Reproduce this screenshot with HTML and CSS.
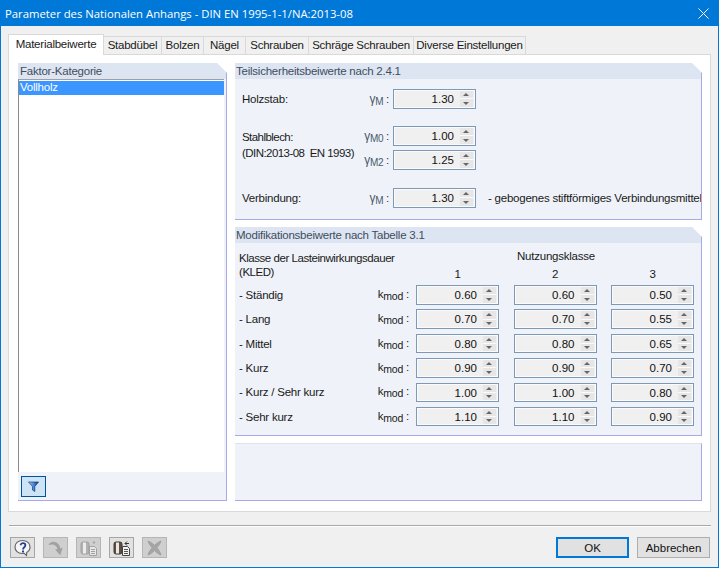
FILE: index.html
```html
<!DOCTYPE html>
<html lang="de">
<head>
<meta charset="utf-8">
<title>Parameter des Nationalen Anhangs</title>
<link rel="stylesheet" href="styles.css">
</head>
<body>
<div class="window">
  <div class="titlebar">
    <span class="title">Parameter des Nationalen Anhangs - DIN EN 1995-1-1/NA:2013-08</span>
    <svg class="close" width="11" height="11" viewBox="0 0 11 11"><path d="M.5.5l10 10M10.500.5l-10 10" stroke="#fff" stroke-width="1" fill="none"/></svg>
  </div>
  <div class="content">
    <div class="tabs">
      <div class="tab active">Materialbeiwerte</div>
      <div class="tab w-stab">Stabdübel</div>
      <div class="tab w-bolz">Bolzen</div>
      <div class="tab w-nag">Nägel</div>
      <div class="tab w-sch">Schrauben</div>
      <div class="tab w-schr">Schräge Schrauben</div>
      <div class="tab w-div">Diverse Einstellungen</div>
    </div>
    <div class="pane">
      <section class="panel left">
        <div class="head">Faktor-Kategorie</div>
        <div class="list"><div class="item">Vollholz</div></div>
        <div class="list-foot">
          <button class="filter" aria-label="Filter">
            <svg width="11" height="11" viewBox="0 0 11 11"><defs><linearGradient id="f" x1="0" x2="1" y1="0" y2="0"><stop offset="0" stop-color="#a8d0f8"/><stop offset=".5" stop-color="#4b8ad8"/><stop offset="1" stop-color="#10306f"/></linearGradient></defs><path d="M.5 1h10L6.800 5.500V10.500L4.500 9V5.500z" fill="url(#f)" stroke="#1c3c78" stroke-width=".7"/></svg>
          </button>
        </div>
      </section>
      <div class="right">
        <section class="panel p1">
          <div class="head">Teilsicherheitsbeiwerte nach 2.4.1</div>
          <div class="safety">
            <div class="lbl r-holz">Holzstab:</div>
            <div class="sym r-holz"><i>γ</i><sub>M</sub> :</div>
            <div class="spin r-holz"><span class="val">1.30</span><span class="arrows"><b class="up"></b><b class="dn"></b></span></div>

            <div class="lbl r-st1">Stahlblech:<br>(DIN:2013-08&nbsp; EN 1993)</div>
            <div class="sym r-m0"><i>γ</i><sub>M0</sub> :</div>
            <div class="spin r-m0"><span class="val">1.00</span><span class="arrows"><b class="up"></b><b class="dn"></b></span></div>
            <div class="sym r-m2"><i>γ</i><sub>M2</sub> :</div>
            <div class="spin r-m2"><span class="val">1.25</span><span class="arrows"><b class="up"></b><b class="dn"></b></span></div>

            <div class="lbl r-ver">Verbindung:</div>
            <div class="sym r-ver"><i>γ</i><sub>M</sub> :</div>
            <div class="spin r-ver"><span class="val">1.30</span><span class="arrows"><b class="up"></b><b class="dn"></b></span></div>
            <div class="note r-ver">- gebogenes stiftförmiges Verbindungsmittel</div>
          </div>
        </section>
        <section class="panel p2">
          <div class="head">Modifikationsbeiwerte nach Tabelle 3.1</div>
          <div class="mods">
            <div class="kled">Klasse der Lasteinwirkungsdauer<br>(KLED)</div>
            <div class="nutz">Nutzungsklasse</div>
            <div class="cols">
              <span class="cn">1</span><span class="cn">2</span><span class="cn">3</span>
            </div>
            <div class="mrow">
              <div class="mlbl">- Ständig</div><div class="k">k<sub>mod</sub> :</div>
              <div class="spin"><span class="val">0.60</span><span class="arrows"><b class="up"></b><b class="dn"></b></span></div>
              <div class="spin"><span class="val">0.60</span><span class="arrows"><b class="up"></b><b class="dn"></b></span></div>
              <div class="spin"><span class="val">0.50</span><span class="arrows"><b class="up"></b><b class="dn"></b></span></div>
            </div>
            <div class="mrow">
              <div class="mlbl">- Lang</div><div class="k">k<sub>mod</sub> :</div>
              <div class="spin"><span class="val">0.70</span><span class="arrows"><b class="up"></b><b class="dn"></b></span></div>
              <div class="spin"><span class="val">0.70</span><span class="arrows"><b class="up"></b><b class="dn"></b></span></div>
              <div class="spin"><span class="val">0.55</span><span class="arrows"><b class="up"></b><b class="dn"></b></span></div>
            </div>
            <div class="mrow">
              <div class="mlbl">- Mittel</div><div class="k">k<sub>mod</sub> :</div>
              <div class="spin"><span class="val">0.80</span><span class="arrows"><b class="up"></b><b class="dn"></b></span></div>
              <div class="spin"><span class="val">0.80</span><span class="arrows"><b class="up"></b><b class="dn"></b></span></div>
              <div class="spin"><span class="val">0.65</span><span class="arrows"><b class="up"></b><b class="dn"></b></span></div>
            </div>
            <div class="mrow">
              <div class="mlbl">- Kurz</div><div class="k">k<sub>mod</sub> :</div>
              <div class="spin"><span class="val">0.90</span><span class="arrows"><b class="up"></b><b class="dn"></b></span></div>
              <div class="spin"><span class="val">0.90</span><span class="arrows"><b class="up"></b><b class="dn"></b></span></div>
              <div class="spin"><span class="val">0.70</span><span class="arrows"><b class="up"></b><b class="dn"></b></span></div>
            </div>
            <div class="mrow">
              <div class="mlbl">- Kurz / Sehr kurz</div><div class="k">k<sub>mod</sub> :</div>
              <div class="spin"><span class="val">1.00</span><span class="arrows"><b class="up"></b><b class="dn"></b></span></div>
              <div class="spin"><span class="val">1.00</span><span class="arrows"><b class="up"></b><b class="dn"></b></span></div>
              <div class="spin"><span class="val">0.80</span><span class="arrows"><b class="up"></b><b class="dn"></b></span></div>
            </div>
            <div class="mrow">
              <div class="mlbl">- Sehr kurz</div><div class="k">k<sub>mod</sub> :</div>
              <div class="spin"><span class="val">1.10</span><span class="arrows"><b class="up"></b><b class="dn"></b></span></div>
              <div class="spin"><span class="val">1.10</span><span class="arrows"><b class="up"></b><b class="dn"></b></span></div>
              <div class="spin"><span class="val">0.90</span><span class="arrows"><b class="up"></b><b class="dn"></b></span></div>
            </div>
          </div>
        </section>
        <section class="p3"></section>
      </div>
    </div>
    <div class="sep"></div>
    <div class="footer">
      <div class="tools">
        <button class="tool" aria-label="Hilfe">
          <svg width="21" height="18" viewBox="0 0 21 18"><path d="M10.500 1.500C6 1.500 3 4.300 3 8s3 6.500 7 6.500c.8 0 1.500 0 2.200-.2L14.500 16.500l.2-3C16.800 12.300 18 10.300 18 8c0-3.700-3-6.500-7.500-6.500z" fill="#f6f6f8" stroke="#666" stroke-width="1.200"/><path d="M8.500 6.200C8.800 4.900 9.700 4.200 10.900 4.200c1.500 0 2.500 .9 2.500 2.100 0 1.900-2.400 2-2.400 4.200" fill="none" stroke="#24408c" stroke-width="1.800"/><rect x="10" y="11.500" width="2" height="2" fill="#24408c"/></svg>
        </button>
        <button class="tool off" aria-label="Zurück">
          <svg width="21" height="18" viewBox="0 0 21 18"><path d="M4 5.500C6 3 9 2.500 11.500 4c2 1.200 3.200 3.500 3.300 6.200l2.200-1-2 6.300-4.200-4.700 2.300.2C12.800 8.500 11.500 6.800 9.800 5.800 8 4.800 6 4.800 4 5.500z" fill="#a2a2a2" stroke="#979797" stroke-width=".7"/></svg>
        </button>
        <button class="tool off" aria-label="Importieren">
          <svg width="21" height="18" viewBox="0 0 21 18"><rect x="3" y="3" width="8" height="12" rx="2" fill="#b2b2b2" stroke="#a0a0a0"/><rect x="5" y="3.500" width="3" height="11" fill="#ececec"/><path d="M11.500 7.500h5l2 2v7h-7z" fill="#e8e8e8" stroke="#a0a0a0"/><path d="M13 10.500h4M13 12.500h4M13 14.500h4" stroke="#a0a0a0"/><circle cx="16" cy="3.500" r="1.200" fill="#a8a8a8"/></svg>
        </button>
        <button class="tool" aria-label="Exportieren">
          <svg width="21" height="18" viewBox="0 0 21 18"><rect x="3" y="3" width="8" height="12" rx="2" fill="#5e4f44" stroke="#3d3a36"/><rect x="5" y="3.500" width="3" height="11" fill="#ece8e0"/><path d="M11.500 7.500h5l2 2v7h-7z" fill="#f2f2f2" stroke="#444"/><path d="M13 10.500h4M13 12.500h4M13 14.500h4" stroke="#555"/><path d="M18 4.500h-4M16 2.500l-2 2 2 2" fill="none" stroke="#333"/></svg>
        </button>
        <button class="tool off" aria-label="Löschen">
          <svg width="21" height="18" viewBox="0 0 21 18"><path d="M4 2c2.500 1 4.800 2.600 6.500 4.300C12.200 4.600 14.500 3 17 2c-.8 2.700-2.500 5-4.200 6.800 1.800 1.800 3.400 4.200 4.200 7.200-2.700-1-4.800-2.700-6.500-4.500C8.800 13.300 6.700 15 4 16c.8-3 2.400-5.400 4.200-7.200C6.500 7 4.800 4.700 4 2z" fill="#a6a6a6" stroke="#969696" stroke-width=".7"/></svg>
        </button>
      </div>
      <div class="actions">
        <button class="btn ok">OK</button>
        <button class="btn">Abbrechen</button>
      </div>
    </div>
  </div>
</div>
</body>
</html>
```
FILE: styles.css
```css
* { box-sizing: border-box; }
html, body { margin: 0; padding: 0; }
body { width: 719px; height: 568px; overflow: hidden; font: 11.500px "Liberation Sans", Arial, sans-serif; letter-spacing: -.23px; color: #1a1a1a; }
.window { width: 719px; height: 568px; display: flex; flex-direction: column; background: #f0f0f0; border: 1px solid #0078d7; border-top: 0; }
.titlebar { height: 26px; margin: 0 -1px; padding: 0 10px 0 5px; background: #0078d7; color: #fff; display: flex; align-items: center; justify-content: space-between; flex: none; }
.title { font: 11.300px "Open Sans", sans-serif; letter-spacing: 0; }
.content { flex: 1; display: flex; flex-direction: column; padding: 8px 7px 9px 7px; min-height: 0; }
.tabs { display: flex; height: 20px; flex: none; position: relative; z-index: 1; }
.tab { height: 19px; margin-top: 2px; border: 1px solid #d9d9d9; border-left: 0; background: #f0f0f0; text-align: center; line-height: 17px; white-space: nowrap; flex: none; }
.tab.active { width: 96px; height: 21px; margin-top: 0; border: 1px solid #d9d9d9; border-bottom: 0; background: #fff; line-height: 18px; }
.w-stab { width: 58px; }
.w-bolz { width: 42px; }
.w-nag { width: 42px; }
.w-sch { width: 63px; }
.w-schr { width: 105px; }
.w-div { width: 112px; }
.pane { height: 458px; flex: none; background: #fff; border: 1px solid #d9d9d9; padding: 8px 8px 10px 9px; display: flex; gap: 8px; }
.panel { background: #eff3f9; border-right: 1px solid #a9a9e6; border-bottom: 1px solid #a9a9e6; clip-path: polygon(0 0, calc(100% - 10px) 0, 100% 10px, 100% 100%, 0 100%); }
.head { height: 16px; background: #dde5f3; color: #3f4d5c; padding: 1px 0 0 1px; line-height: 14px; white-space: nowrap; }
.left { width: 209px; display: flex; flex-direction: column; flex: none; }
.left .head { padding-left: 2px; }
.list { height: 393px; background: #fff; border-left: 1px solid #8a8a8a; border-top: 1px solid #a0a0a0; margin-right: 2px; padding: 1px 0 0 0; flex: none; }
.item { height: 14px; background: #3b96ff; color: #fff; line-height: 13px; padding-left: 1px; }
.list-foot { flex: 1; padding: 4px 0 0 3px; }
.filter { width: 25px; height: 21px; padding: 0; background: #cde4f7; border: 1px solid #005499; display: flex; align-items: center; justify-content: center; }
.right { flex: 1; display: flex; flex-direction: column; min-width: 0; }
.p1 { height: 157px; }
.p2 { height: 209px; margin-top: 7px; }
.p3 { height: 58px; margin-top: 7px; background: #eff3f9; border: 1px solid #dfe5f0; border-width: 1px 1px 1px 0; border-right-color: #a9a9e6; border-bottom-color: #a9a9e6; border-top-color: #dde3ee; }
.safety { display: grid; grid-template-columns: 127px 24px 83px 1fr; grid-template-rows: 10px 19px 18px 20px 4px 20px 18px 20px; padding-left: 7px; overflow: hidden; }
.lbl { grid-column: 1; align-self: center; white-space: nowrap; }
.sym { grid-column: 2; justify-self: end; margin-right: 4px; align-self: center; white-space: nowrap; color: #333; letter-spacing: -.3px; }
.spin { width: 83px; background: #f0f0f0; border: 1px solid #7c9ab8; box-shadow: inset 0 0 0 1px #fbfbfb; display: flex; align-items: stretch; padding: 1px 2px 1px 2px; flex: none; }
.safety .spin { grid-column: 3; height: 19.500px; }
.val { flex: 1; text-align: right; padding-right: 6px; font-size: 11.500px; letter-spacing: 0; line-height: 16px; color: #111; }
.arrows { width: 13px; display: flex; flex-direction: column; gap: 1px; flex: none; background: #fafafa; }
.arrows b { flex: 1; background: #e6e6e6; position: relative; display: block; }
.up::after, .dn::after { content: ""; position: absolute; left: 3px; border-left: 3.500px solid transparent; border-right: 3.500px solid transparent; }
.up::after { top: 2px; border-bottom: 3px solid #666; }
.dn::after { bottom: 2px; border-top: 3px solid #666; }
.r-holz { grid-row: 2; }
.r-st1 { grid-row: 4 / 7; align-self: start; margin-top: 3px; line-height: 16px; letter-spacing: -.55px; }
.r-m0 { grid-row: 4; }
.r-m2 { grid-row: 6; }
.r-ver { grid-row: 8; }
.safety .spin.r-m2, .safety .spin.r-ver, .safety .spin.r-m0 { align-self: start; }
.sym i { font: normal 12px "Liberation Sans", sans-serif; color: #4a5a6a; }
.sym sub { font-size: 10px; color: #4a5a6a; }
sub { font-size: 10.500px; line-height: 0; vertical-align: -2px; }
.note { grid-column: 4; margin-left: 12px; white-space: nowrap; align-self: center; }
.mods { position: relative; padding: 25px 0 0 4px; }
.kled { position: absolute; left: 4px; top: 8px; line-height: 14px; white-space: nowrap; letter-spacing: -.45px; }
.nutz { position: absolute; left: 282px; top: 7px; width: 74px; text-align: center; white-space: nowrap; }
.cols { height: 13px; display: grid; grid-template-columns: 83px 83px 83px; column-gap: 14.500px; margin: 0 0 4px 177px; text-align: center; line-height: 13px; }
.mrow { display: flex; height: 19.500px; margin-bottom: 4.900px; align-items: center; }
.mlbl { width: 130px; flex: none; white-space: nowrap; }
.k { width: 40px; flex: none; text-align: right; margin-right: 7px; margin-top: -2px; white-space: nowrap; }
.mrow .spin { height: 19.500px; margin-right: 14.500px; }
.sep { height: 2px; flex: none; margin: 13px 0 0 1px; background: #a9a9a9; border-bottom: 1px solid #fff; }
.footer { display: flex; justify-content: space-between; margin-top: 10px; padding: 0 1px 0 2px; flex: none; height: 21px; }
.tools { display: flex; gap: 8px; }
.tool { width: 25px; height: 21px; padding: 0; border: 1px solid #a6a6a6; background: #e1e1e1; display: flex; align-items: center; justify-content: center; }
.tool.off { background: #cfcfcf; border-color: #b5b5b5; }
.actions { display: flex; gap: 8px; }
.btn { width: 73px; height: 21px; padding: 0; border: 1px solid #adadad; background: #e1e1e1; font: 11.500px "Liberation Sans", sans-serif; letter-spacing: 0; color: #111; }
.btn.ok { border: 2px solid #0078d7; }
```
